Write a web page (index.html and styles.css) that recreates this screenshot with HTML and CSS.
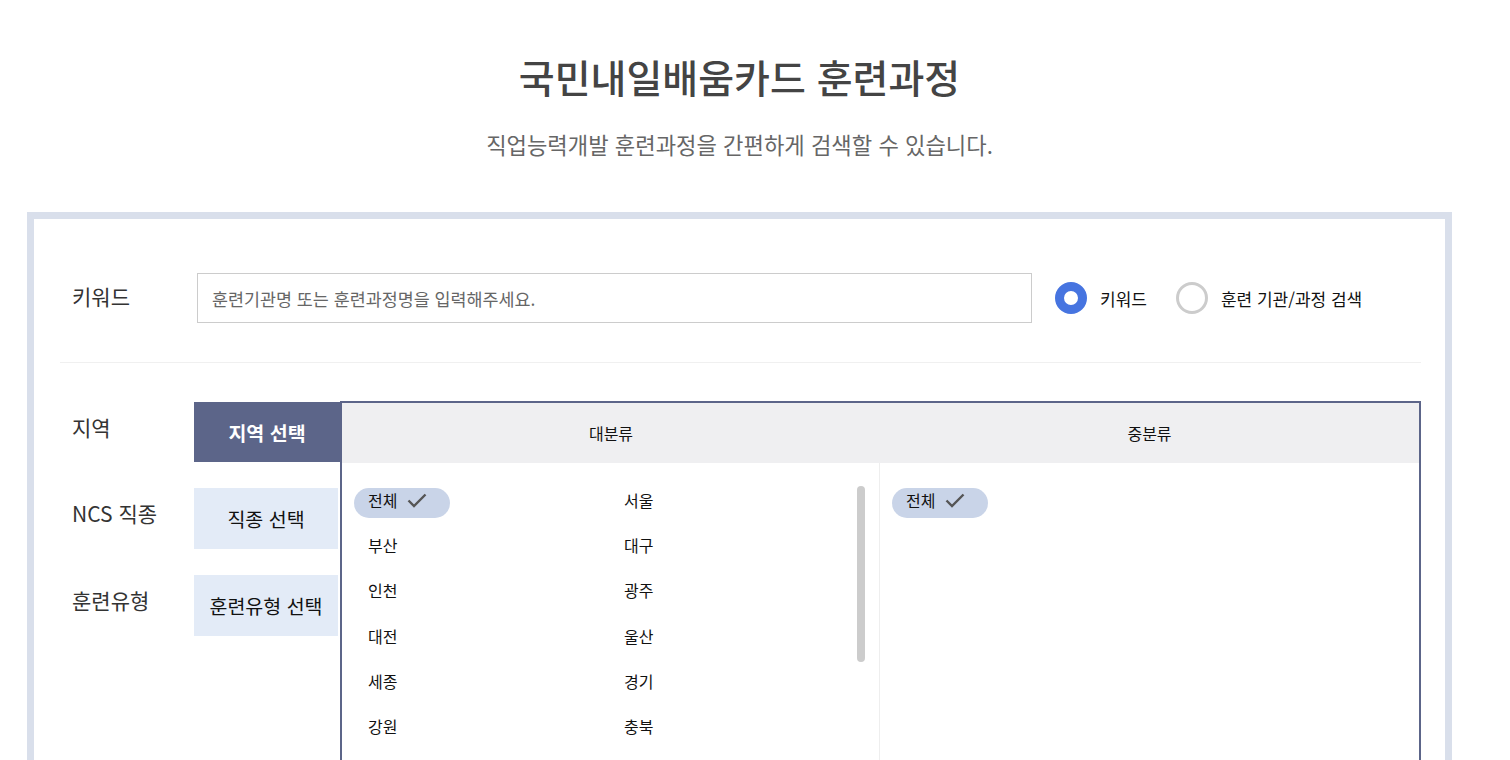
FILE: index.html
```html
<!DOCTYPE html>
<html lang="ko">
<head>
    <meta charset="UTF-8">
    <meta name="viewport" content="width=device-width, initial-scale=1.0">
    <title>국민내일배움카드 훈련과정</title>
    <link rel="stylesheet" href="styles.css">
</head>
<body>
    <div class="page">
        <div class="page-head">
            <h1>국민내일배움카드 훈련과정</h1>
            <p class="sub">직업능력개발 훈련과정을 간편하게 검색할 수 있습니다.</p>
        </div>

        <div class="search-box">
            <div class="keyword-row">
                <div class="row-label">키워드</div>
                <input type="text" class="keyword-input" placeholder="훈련기관명 또는 훈련과정명을 입력해주세요.">
                <label class="radio checked"><span class="radio-mark"></span>키워드</label>
                <label class="radio"><span class="radio-mark"></span>훈련 기관/과정 검색</label>
            </div>

            <div class="filter-area">
                <div class="filter-tabs">
                    <div class="tab-row">
                        <div class="row-label">지역</div>
                        <div class="tab active">지역 선택</div>
                    </div>
                    <div class="tab-row">
                        <div class="row-label">NCS 직종</div>
                        <div class="tab">직종 선택</div>
                    </div>
                    <div class="tab-row">
                        <div class="row-label">훈련유형</div>
                        <div class="tab">훈련유형 선택</div>
                    </div>
                </div>

                <div class="panel">
                    <div class="panel-head">
                        <div class="panel-col first">대분류</div>
                        <div class="panel-col">중분류</div>
                    </div>
                    <div class="panel-body">
                        <div class="col-body first">
                            <div class="item-list">
                                <div class="item chip">전체 <svg width="20" height="16" viewBox="0 0 20 16"><path d="M1.5 7.5 L7 13 L18.5 1.5" fill="none" stroke="#555" stroke-width="2.4"/></svg></div>
                                <div class="item">서울</div>
                                <div class="item">부산</div>
                                <div class="item">대구</div>
                                <div class="item">인천</div>
                                <div class="item">광주</div>
                                <div class="item">대전</div>
                                <div class="item">울산</div>
                                <div class="item">세종</div>
                                <div class="item">경기</div>
                                <div class="item">강원</div>
                                <div class="item">충북</div>
                                <div class="item">충남</div>
                                <div class="item">전북</div>
                                <div class="item">전남</div>
                                <div class="item">경북</div>
                                <div class="item">경남</div>
                                <div class="item">제주</div>
                            </div>
                            <div class="scroll-track">
                                <div class="scroll-thumb"></div>
                            </div>
                        </div>
                        <div class="col-body">
                            <div class="item chip">전체 <svg width="20" height="16" viewBox="0 0 20 16"><path d="M1.5 7.5 L7 13 L18.5 1.5" fill="none" stroke="#555" stroke-width="2.4"/></svg></div>
                        </div>
                    </div>
                </div>
            </div>
        </div>
    </div>
</body>
</html>
```

FILE: styles.css
```css
body {
    font-family: "Noto Sans CJK KR", "Noto Sans", sans-serif;
    background-color: #ffffff;
    color: #222;
    margin: 0;
    padding: 0;
}

.page {
    width: 1425px;
    margin-left: 27px;
}

.page-head {
    text-align: center;
    padding-top: 50px;
}

h1 {
    font-size: 39px;
    font-weight: 500;
    line-height: 52px;
    color: #444;
    margin: 0;
}

.sub {
    font-size: 22.2px;
    line-height: 30px;
    color: #666;
    margin: 27px 0 0;
}

.search-box {
    margin-top: 53px;
    border: 7px solid #d9dfeb;
    border-bottom: none;
    padding: 54px 24px 40px 26px;
    height: 600px;
}

.keyword-row {
    display: flex;
    align-items: center;
    padding-bottom: 39px;
    border-bottom: 1px solid #f0f0f0;
}

.row-label {
    width: 125px;
    padding-left: 12px;
    font-size: 21px;
    color: #333;
    flex-shrink: 0;
}

.keyword-row .row-label {
    margin-top: -4px;
}

.keyword-input {
    width: 835px;
    height: 50px;
    box-sizing: border-box;
    border: 1px solid #cccccc;
    padding: 0 14px;
    font-family: inherit;
    font-size: 17.4px;
    color: #333;
    outline: none;
}

.keyword-input::placeholder {
    color: #666;
}

.radio {
    display: flex;
    align-items: center;
    font-size: 17px;
    color: #111;
    margin-left: 23px;
    margin-right: 6px;
}

.radio-mark {
    width: 32px;
    height: 32px;
    box-sizing: border-box;
    border-radius: 50%;
    border: 3px solid #cccccc;
    margin-right: 13px;
}

.radio.checked .radio-mark {
    border: 9px solid #4674e0;
}

.filter-area {
    display: flex;
    margin-top: 38px;
}

.filter-tabs {
    display: flex;
    flex-direction: column;
    gap: 26px;
    padding-top: 1px;
    width: 280px;
    flex-shrink: 0;
}

.tab-row {
    display: flex;
}

.tab-row .row-label {
    width: 122px;
    padding-top: 10px;
}

.tab {
    width: 144px;
    height: 61px;
    display: flex;
    align-items: center;
    justify-content: center;
    font-size: 19.5px;
    color: #111;
    background-color: #e3ebf7;
}

.tab.active {
    width: 146px;
    height: 60px;
    background-color: #5c6589;
    color: #ffffff;
    font-weight: 700;
}

.panel {
    flex: 1;
    border: 2px solid #5c6589;
    border-bottom: none;
    height: 400px;
}

.panel-head {
    display: flex;
    height: 60px;
    background-color: #efeff1;
}

.panel-col {
    flex: 1;
    display: flex;
    align-items: center;
    justify-content: center;
    font-size: 16px;
    color: #111;
}

.panel-col.first {
    flex: none;
    width: 538px;
}

.panel-body {
    display: flex;
    height: 340px;
}

.col-body {
    flex: 1;
    padding: 25px 12px 0 12px;
}

.col-body.first {
    flex: none;
    width: 511px;
    display: flex;
    align-items: flex-start;
    border-right: 1px solid #eeeeee;
    padding: 23px 14px 0 12px;
}

.item-list {
    flex: 1;
    height: 277px;
    overflow: hidden;
    display: grid;
    grid-template-columns: 256px 1fr;
    grid-auto-rows: 30px;
    row-gap: 15.4px;
    padding-top: 2px;
}

.scroll-track {
    width: 8px;
    height: 280px;
}

.scroll-thumb {
    height: 176px;
    background-color: #cccccc;
    border-radius: 4px;
}

.item {
    height: 30px;
    display: flex;
    align-items: center;
    padding-left: 14px;
    padding-bottom: 7px;
    box-sizing: border-box;
    font-size: 16px;
    color: #111;
}

.chip {
    width: 96px;
    background-color: #c9d4e8;
    border-radius: 15px;
    gap: 10px;
}

.chip svg {
    margin-top: 3px;
}
```
